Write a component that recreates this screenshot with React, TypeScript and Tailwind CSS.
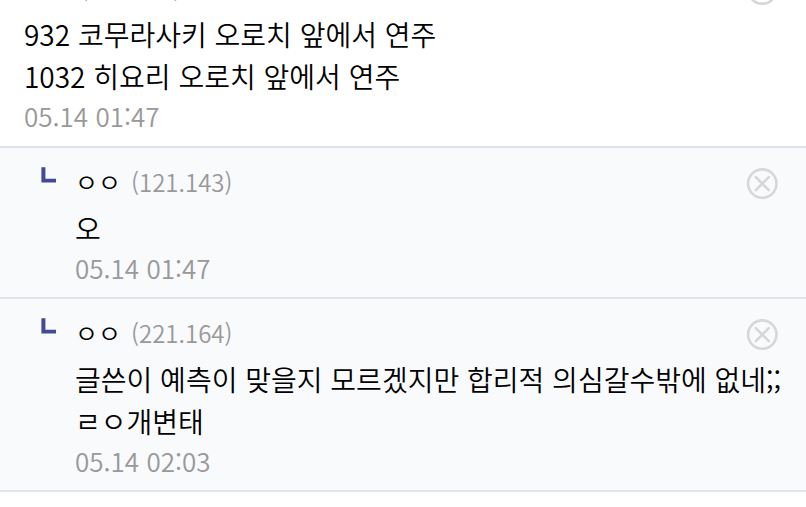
interface Comment {
    id: number;
    name: string;
    ip: string;
    lines: string[];
    date: string;
    reply: boolean;
}

const comments: Comment[] = [
    {
        id: 1,
        name: 'ㅇㅇ',
        ip: '(121.143)',
        lines: ['932 코무라사키 오로치 앞에서 연주', '1032 히요리 오로치 앞에서 연주'],
        date: '05.14 01:47',
        reply: false,
    },
    {
        id: 2,
        name: 'ㅇㅇ',
        ip: '(121.143)',
        lines: ['오'],
        date: '05.14 01:47',
        reply: true,
    },
    {
        id: 3,
        name: 'ㅇㅇ',
        ip: '(221.164)',
        lines: ['글쓴이 예측이 맞을지 모르겠지만 합리적 의심갈수밖에 없네;;', 'ㄹㅇ개변태'],
        date: '05.14 02:03',
        reply: true,
    },
];

function ReplyMark() {
    return (
        <svg width="15" height="16" viewBox="0 0 15 16" className="mt-[5px] shrink-0" aria-hidden="true">
            <path d="M0.4 0.3h4v11.4H15v3.8H0.4z" fill="#414a96" />
        </svg>
    );
}

function DeleteButton() {
    return (
        <button type="button" aria-label="삭제" className="shrink-0">
            <svg width="32" height="32" viewBox="0 0 32 32" fill="none" stroke="#d6d7d9">
                <circle cx="16.3" cy="15.6" r="14.2" strokeWidth="2.6" />
                <path d="M9.8 9.1l13 13M22.8 9.1l-13 13" strokeWidth="2.6" strokeLinecap="round" />
            </svg>
        </button>
    );
}

function CommentItem({ comment }: { comment: Comment }) {
    return (
        <li
            className={
                comment.reply
                    ? 'flex border-t-2 border-[#e0e2ee] bg-[#f9fafc] pt-3.5 pr-3 pb-2.5 pl-[41px]'
                    : 'flex pr-3 pb-[11px] pl-6'
            }
        >
            {comment.reply && <ReplyMark />}
            <div className={comment.reply ? 'ml-[19px] min-w-0 flex-1' : 'min-w-0 flex-1'}>
                <div className="mb-px flex h-11 items-center justify-between pr-4">
                    <div className="flex items-baseline gap-2.5 pb-1">
                        <span className="text-[25px]">{comment.name}</span>
                        <span className="text-2xl text-[#999]">{comment.ip}</span>
                    </div>
                    <DeleteButton />
                </div>
                {comment.lines.map((line) => (
                    <p key={line} className="text-[28px] leading-[42px]">
                        {line}
                    </p>
                ))}
                <time className="block text-[26px] leading-[38px] text-[#999]">{comment.date}</time>
            </div>
        </li>
    );
}

export default function App() {
    return (
        <main
            lang="ko"
            className="overflow-hidden bg-white font-['Noto_Sans_CJK_KR',sans-serif] font-[350] text-black"
        >
            {/* The list is scrolled part of the way past the first header */}
            <ul className="-mt-8 border-b-2 border-[#e0e2ee]">
                {comments.map((comment) => (
                    <CommentItem key={comment.id} comment={comment} />
                ))}
            </ul>
        </main>
    );
}
